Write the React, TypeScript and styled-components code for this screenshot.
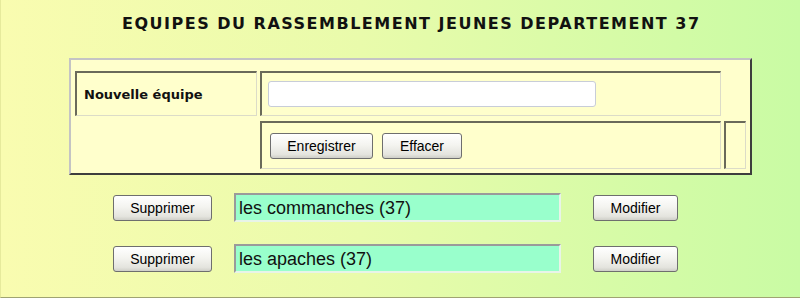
import React from 'react';
import styled, { createGlobalStyle } from 'styled-components';

const GlobalStyle = createGlobalStyle`
  html, body {
    margin: 0;
    padding: 0;
  }
  body {
    width: 800px;
    height: 298px;
    overflow: hidden;
  }
`;

// Whole page with the yellow-to-green wash
const Page = styled.div`
  box-sizing: border-box;
  width: 800px;
  height: 298px;
  padding-top: 14px;
  background: linear-gradient(90deg, #f9fcb0 0%, #e9fbab 45%, #c9fba4 100%);
  border-bottom: 1px solid #9fa372;
  border-left: 1px solid #e6ea9c;
`;

const Title = styled.h1`
  margin: 0 0 0 121px;
  width: 580px;
  font-family: 'DejaVu Sans', sans-serif;
  font-size: 16px;
  font-weight: bold;
  letter-spacing: 1.5px;
  line-height: 20px;
  color: #111;
  white-space: nowrap;
`;

// Outer form table, outset border
const FormTable = styled.div`
  box-sizing: border-box;
  margin: 24px 0 0 68px;
  width: 683px;
  padding: 11px 4px 4px 4px;
  background: #ffffcc;
  border: 2px solid;
  border-color: #c4c4c4 #3e3e3e #3e3e3e #c4c4c4;
  display: grid;
  grid-template-columns: 182px 461px 22px;
  grid-template-rows: 45px 48px;
  column-gap: 3px;
  row-gap: 5px;
`;

const Cell = styled.div<{ $bordered?: boolean }>`
  box-sizing: border-box;
  display: flex;
  align-items: center;
  border: 1px solid;
  border-color: ${(p) =>
    p.$bordered ? '#6a6a5a #dcdcc8 #dcdcc8 #6a6a5a' : 'transparent'};
  border-width: ${(p) => (p.$bordered ? '2px 1px 1px 2px' : '1px')};
`;

const LabelCell = styled(Cell)`
  padding-left: 7px;
  font-family: 'DejaVu Sans', sans-serif;
  font-weight: bold;
  font-size: 13px;
  color: #111;
`;

const InputCell = styled(Cell)`
  padding-left: 6px;
`;

const ButtonCell = styled(Cell)`
  padding-left: 8px;
  gap: 9px;
`;

const TextField = styled.input`
  box-sizing: border-box;
  width: 328px;
  height: 26px;
  border: 1px solid #c8cdd8;
  border-radius: 3px;
  background: #fff;
  outline: none;
`;

// XP-style push button
const Button = styled.button<{ $w: number }>`
  box-sizing: border-box;
  width: ${(p) => p.$w}px;
  height: 26px;
  padding: 0;
  border: 1px solid #6e6e6e;
  border-radius: 3px;
  background: linear-gradient(180deg, #ffffff 0%, #f4f4f0 45%, #e4e4de 85%, #cfcfc8 100%);
  font-family: 'Liberation Sans', Arial, sans-serif;
  font-size: 14px;
  color: #000;
  cursor: pointer;
`;

const TeamList = styled.div`
  margin: 18px 0 0 112px;
  display: flex;
  flex-direction: column;
  gap: 22px;
`;

const TeamRow = styled.div`
  display: flex;
  align-items: center;
`;

const TeamName = styled.div`
  box-sizing: border-box;
  margin: 0 32px 0 22px;
  width: 327px;
  height: 29px;
  padding: 2px 0 0 3px;
  display: flex;
  align-items: center;
  background: #99ffcc;
  border: 2px solid;
  border-color: #9a9a9a #e8f4e8 #e8f4e8 #9a9a9a;
  font-family: 'Liberation Sans', Arial, sans-serif;
  font-size: 18px;
  color: #111;
`;

const teams = ['les commanches (37)', 'les apaches (37)'];

export default function App() {
  return (
    <>
      <GlobalStyle />
      <Page>
        <Title>EQUIPES DU RASSEMBLEMENT JEUNES DEPARTEMENT 37</Title>

        <FormTable>
          <LabelCell $bordered>Nouvelle équipe</LabelCell>
          <InputCell $bordered>
            <TextField type="text" />
          </InputCell>
          <Cell />

          <Cell />
          <ButtonCell $bordered>
            <Button $w={103}>Enregistrer</Button>
            <Button $w={80}>Effacer</Button>
          </ButtonCell>
          <Cell $bordered />
        </FormTable>

        <TeamList>
          {teams.map((t) => (
            <TeamRow key={t}>
              <Button $w={99}>Supprimer</Button>
              <TeamName>{t}</TeamName>
              <Button $w={85}>Modifier</Button>
            </TeamRow>
          ))}
        </TeamList>
      </Page>
    </>
  );
}
